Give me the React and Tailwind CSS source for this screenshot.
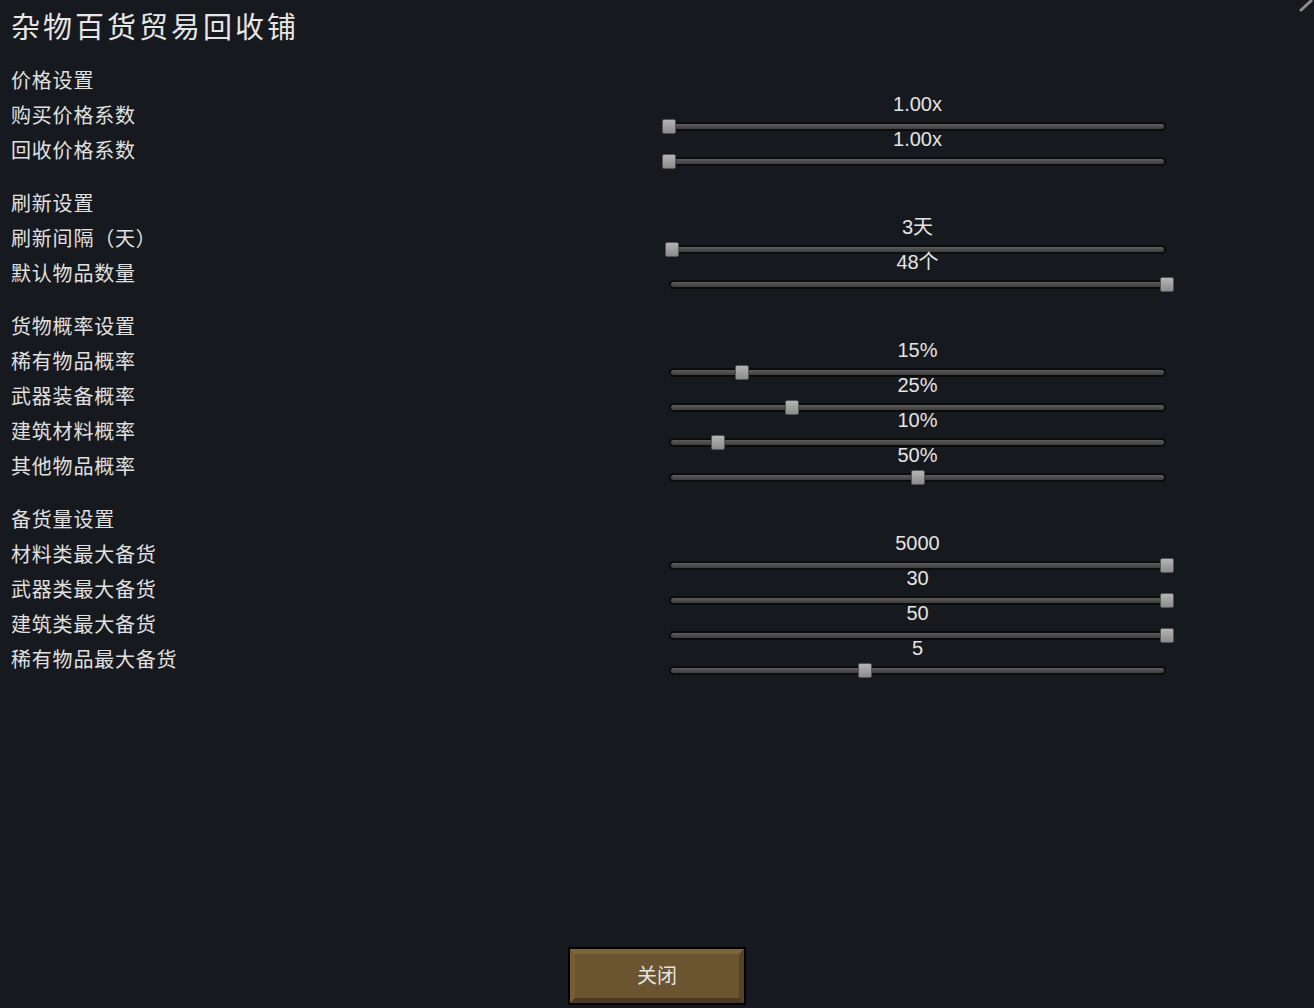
import React from 'react'

const SECTIONS = [
  {
    title: '价格设置',
    rows: [
      { label: '购买价格系数', value: '1.00x', frac: 0 },
      { label: '回收价格系数', value: '1.00x', frac: 0 },
    ],
  },
  {
    title: '刷新设置',
    rows: [
      { label: '刷新间隔（天）', value: '3天', frac: 0.006 },
      { label: '默认物品数量', value: '48个', frac: 1 },
    ],
  },
  {
    title: '货物概率设置',
    rows: [
      { label: '稀有物品概率', value: '15%', frac: 0.147 },
      { label: '武器装备概率', value: '25%', frac: 0.247 },
      { label: '建筑材料概率', value: '10%', frac: 0.099 },
      { label: '其他物品概率', value: '50%', frac: 0.5 },
    ],
  },
  {
    title: '备货量设置',
    rows: [
      { label: '材料类最大备货', value: '5000', frac: 1 },
      { label: '武器类最大备货', value: '30', frac: 1 },
      { label: '建筑类最大备货', value: '50', frac: 1 },
      { label: '稀有物品最大备货', value: '5', frac: 0.394 },
    ],
  },
]

const FONT = { fontFamily: '"Liberation Sans", "Noto Sans CJK SC", sans-serif' }

function Slider({ value, frac }) {
  return (
    <div className="relative w-[497px] h-[35px]">
      <div className="absolute left-0 right-0 top-[-4px] h-[20px] text-center text-[20px] leading-[20px] text-[#e4e4e4]">
        {value}
      </div>
      <div className="absolute left-0 right-0 top-[24px] h-[9px] rounded-full bg-[#0b0c0d] p-[2px]">
        <div className="h-full rounded-full bg-gradient-to-b from-[#5c5c5c] to-[#3e3e3e]" />
      </div>
      <div
        className="absolute top-[21px] w-[14px] h-[15px] -translate-x-1/2 rounded-[2px] border border-[#555] bg-gradient-to-b from-[#b4b4b4] to-[#8c8c8c]"
        style={{ left: `calc(${frac * 100}% + ${frac}px)` }}
      />
    </div>
  )
}

export default function App() {
  return (
    <div className="relative w-[1314px] h-[1008px] bg-[#16191d] flex flex-col overflow-hidden" style={FONT}>
      <svg className="absolute right-0 top-0" width="16" height="14" viewBox="0 0 16 14">
        <line x1="2" y1="11" x2="14" y2="0" stroke="#8c8c8c" strokeWidth="3" />
      </svg>

      <div className="pt-[8px] pl-[11px] h-[48px] text-[29px] leading-[40px] tracking-[3px] text-[#e6e6e6]">
        杂物百货贸易回收铺
      </div>

      <div className="mt-[15px] flex flex-col gap-[18px]">
        {SECTIONS.map(section => (
          <div key={section.title} className="flex flex-col">
            <div className="h-[35px] pl-[11px] flex items-center text-[20px] tracking-[0.8px] text-[#e0e0e0]">
              {section.title}
            </div>
            {section.rows.map(row => (
              <div key={row.label} className="h-[35px] flex">
                <div className="w-[669px] pl-[11px] flex items-center text-[20px] tracking-[0.8px] text-[#e0e0e0]">
                  {row.label}
                </div>
                <Slider value={row.value} frac={row.frac} />
              </div>
            ))}
          </div>
        ))}
      </div>

      <div className="mt-auto pb-[3px] flex justify-center">
        <button className="w-[178px] h-[58px] border-2 border-black bg-[#6b5430] text-[20px] text-[#e2e2e2]">
          <div className="w-full h-full flex items-center justify-center border-[5px] border-t-[#7f6438] border-l-[#775d34] border-r-[#574325] border-b-[#4a391f]">
            关闭
          </div>
        </button>
      </div>
    </div>
  )
}
